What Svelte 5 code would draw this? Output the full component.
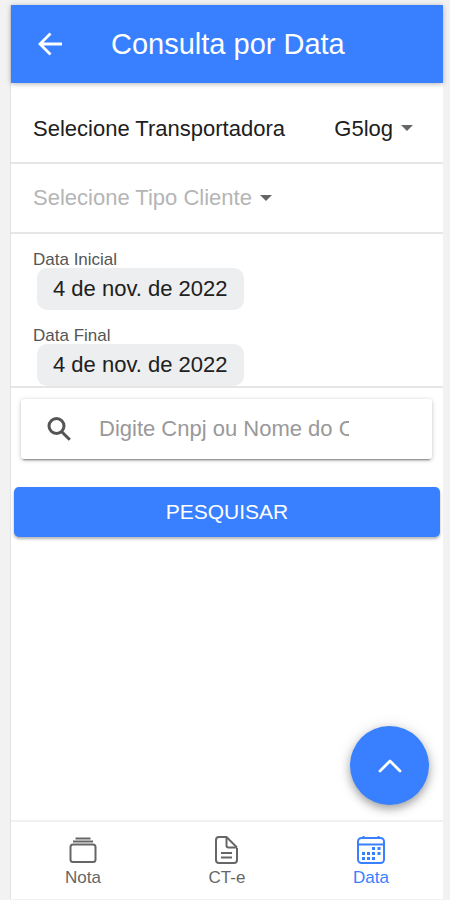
<script lang="ts">
  let carrier = $state('G5log');
  let clientType = $state('');
  let search = $state('');
  let activeTab = $state('Data');

  const dates = [
    { id: 'start', label: 'Data Inicial', value: '4 de nov. de 2022' },
    { id: 'end', label: 'Data Final', value: '4 de nov. de 2022' },
  ];
  const tabs = ['Nota', 'CT-e', 'Data'];
</script>

<div class="page">
  <div class="app">
    <header class="toolbar">
      <button class="back" aria-label="Voltar">
        <svg viewBox="0 0 26 26" width="26" height="26">
          <path d="M13.500 2.500 3 13l10.500 10.500M3 13h22" fill="none" stroke="currentColor" stroke-width="2.800" />
        </svg>
      </button>
      <h1>Consulta por Data</h1>
    </header>

    <main>
      <div class="item first">
        <label for="carrier">Selecione Transportadora</label>
        <span class="select">
          <select id="carrier" bind:value={carrier}>
            <option>G5log</option>
          </select>
          <svg class="caret" viewBox="0 0 14 7" width="14" height="7"><path d="M1 0h12L7 6z" /></svg>
        </span>
      </div>

      <div class="item">
        <span class="select empty">
          <select aria-label="Selecione Tipo Cliente" bind:value={clientType}>
            <option value="" disabled>Selecione Tipo Cliente</option>
          </select>
          <svg class="caret" viewBox="0 0 14 7" width="14" height="7"><path d="M1 0h12L7 6z" /></svg>
        </span>
      </div>

      <div class="dates">
        {#each dates as date}
          <div class="date">
            <label for={date.id}>{date.label}</label>
            <button id={date.id}>{date.value}</button>
          </div>
        {/each}
      </div>

      <div class="search">
        <svg viewBox="0 0 24 24" width="24" height="24">
          <circle cx="9.500" cy="9" r="7.500" />
          <path d="m14.500 14.500 8.300 8.300" />
        </svg>
        <input type="text" aria-label="Pesquisa" placeholder="Digite Cnpj ou Nome do Cliente" bind:value={search} />
      </div>

      <button class="submit">PESQUISAR</button>

      <button class="fab" aria-label="Voltar ao topo">
        <svg viewBox="0 0 24 14" width="24" height="14">
          <path d="M2 12 12 2l10 10" fill="none" stroke="currentColor" stroke-width="2.800" stroke-linecap="round" stroke-linejoin="round" />
        </svg>
      </button>
    </main>

    <nav>
      {#each tabs as tab}
        <button class="tab" class:active={tab === activeTab} onclick={() => (activeTab = tab)}>
          <svg viewBox="0 0 30 30" width="30" height="30">
            {#if tab === 'Nota'}
              <rect x="2.500" y="9.500" width="25" height="17.500" rx="2.500" />
              <path d="M5 6.500h20M7.500 3.500h15" />
            {:else if tab === 'CT-e'}
              <path d="M25 13v12a3 3 0 0 1-3 3H7a3 3 0 0 1-3-3V5a3 3 0 0 1 3-3h7.500L25 12.500" />
              <path d="M14.500 2v8.500a2 2 0 0 0 2 2H25M9 18h11M9 22.500h11" />
            {:else}
              <rect x="2" y="3" width="26" height="25" rx="3.500" />
              <path d="M2 9.500h26M7.500 1v2M22.500 1v2" />
              <path class="dots" d="M16 13.500h3M21.500 13.500h3M6 18.500h3M11 18.500h3M16 18.500h3M21.500 18.500h3M6 23.500h3M11 23.500h3M16 23.500h3" />
            {/if}
          </svg>
          <span>{tab}</span>
        </button>
      {/each}
    </nav>
  </div>
</div>

<style>
  :global(body) {
    margin: 0;
    background: #f2f2f2;
  }
  .page {
    box-sizing: border-box;
    min-height: 100vh;
    padding: 5px 7px 1px 10px;
    display: flex;
    font-family: "Liberation Sans", Arial, sans-serif;
    font-size: 22px;
    color: #202020;
  }
  .page * {
    box-sizing: border-box;
  }
  .app {
    flex: 1;
    min-width: 0;
    display: flex;
    flex-direction: column;
    background: #fff;
    border-left: 1px solid #e2e2e2;
  }
  button, select, input {
    font: inherit;
    color: inherit;
    border: 0;
    margin: 0;
    padding: 0;
    background: none;
  }
  button {
    cursor: pointer;
  }
  .toolbar {
    display: flex;
    align-items: center;
    gap: 48px;
    height: 78px;
    padding: 0 26px;
    background: #3880ff;
    color: #fff;
    box-shadow: 0 1px 5px rgba(0, 0, 0, 0.3);
  }
  .back {
    display: flex;
  }
  h1 {
    margin: 0;
    font-size: 29px;
    font-weight: 400;
    line-height: 36px;
  }
  main {
    flex: 1;
    position: relative;
    display: flex;
    flex-direction: column;
  }
  .item {
    display: flex;
    align-items: center;
    justify-content: space-between;
    height: 70px;
    padding: 0 29px 0 22px;
    border-bottom: 2px solid #e6e6e6;
  }
  .first {
    height: 81px;
    padding-top: 12px;
  }
  .select {
    display: flex;
    align-items: center;
    gap: 7px;
  }
  select {
    appearance: none;
    field-sizing: content;
    line-height: 28px;
  }
  .empty select {
    color: #b5b5b5;
    opacity: 1;
  }
  .caret {
    fill: #666;
  }
  .dates {
    display: flex;
    flex-direction: column;
    gap: 17px;
    padding: 17px 22px 0;
    border-bottom: 2px solid #e6e6e6;
  }
  .date {
    display: flex;
    flex-direction: column;
    align-items: flex-start;
  }
  .date label {
    font-size: 17px;
    line-height: 17px;
    color: #555;
  }
  .date button {
    height: 42px;
    margin-left: 4px;
    padding: 0 16px;
    border-radius: 10px;
    background: #edeef0;
    line-height: 42px;
  }
  .search {
    display: flex;
    align-items: center;
    gap: 28px;
    height: 60px;
    margin: 11px 11px 0 10px;
    padding: 0 83px 0 26px;
    border-radius: 3px;
    background: #fff;
    box-shadow: 0 3px 2px -2px rgba(0, 0, 0, 0.4), 0 1px 4px rgba(0, 0, 0, 0.25);
  }
  .search svg {
    flex: none;
    fill: none;
    stroke: #555;
    stroke-width: 3;
  }
  .search input {
    flex: 1;
    min-width: 0;
    height: 32px;
    outline: none;
  }
  .search input::placeholder {
    color: #999;
    opacity: 1;
  }
  .submit {
    height: 50px;
    margin: 28px 3px 0;
    border-radius: 5px;
    background: #3880ff;
    box-shadow: 0 2px 3px rgba(0, 0, 0, 0.3);
    color: #fff;
    font-size: 21px;
  }
  .fab {
    position: absolute;
    right: 14px;
    bottom: 15px;
    display: flex;
    align-items: center;
    justify-content: center;
    width: 79px;
    height: 79px;
    border-radius: 50%;
    background: #3880ff;
    box-shadow: 0 4px 8px rgba(0, 0, 0, 0.3), 0 1px 16px rgba(0, 0, 0, 0.12);
    color: #fff;
  }
  nav {
    display: flex;
    height: 79px;
    border-top: 2px solid #f0f0f0;
  }
  .tab {
    flex: 1;
    display: flex;
    flex-direction: column;
    align-items: center;
    padding-top: 13px;
    color: #666;
    font-size: 17px;
    line-height: 26px;
  }
  .tab svg {
    fill: none;
    stroke: currentColor;
    stroke-width: 2;
    stroke-linejoin: round;
  }
  .tab .dots {
    stroke-width: 3;
  }
  .active {
    color: #3880ff;
  }
</style>
